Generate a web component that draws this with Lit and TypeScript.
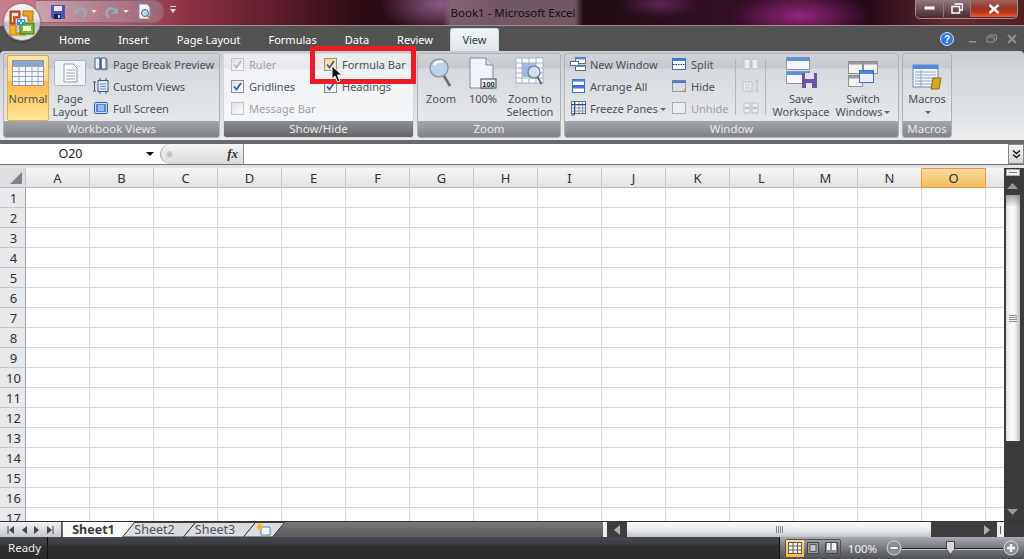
import { LitElement, html, css } from 'lit';
import { customElement } from 'lit/decorators.js';

const COLS = 'ABCDEFGHIJKLMNO'.split('');
const ROWS = Array.from({ length: 17 }, (_, i) => i + 1);

// ---- small ribbon icons, all 16 box unless noted
const icons: Record<string, unknown> = {
  pageBreak: html`<svg width="16" height="16" viewBox="0 0 16 16"><path d="M2 2h5v11H2zM8 2h5v11H8z" fill="#eef3fb" stroke="#3c5c94"/><path d="M3 13.500h11V3" fill="none" stroke="#7d8794" stroke-width="1.400"/><path d="M7.500 2v11" stroke="#3c5c94" stroke-width="2"/></svg>`,
  custom: html`<svg width="18" height="16" viewBox="0 0 18 16"><path d="M1 4h3M1 13h3M2.500 4v9" stroke="#44587c" fill="none"/><rect x="6" y="2.500" width="10" height="11" fill="#dfe8f6" stroke="#44587c"/><path d="M8 6h6M8 8.500h6M8 11h6" stroke="#6d8fc6"/><path d="M7 1h2M13 1h2M7 15h2M13 15h2" stroke="#44587c"/></svg>`,
  full: html`<svg width="16" height="16" viewBox="0 0 16 16"><rect x="1.500" y="2.500" width="13" height="11" rx="1" fill="#cfe0f7" stroke="#2d58a8"/><rect x="3" y="4" width="10" height="8" fill="#4f86d8"/><path d="M5 6h6M5 8h6M5 10h6" stroke="#e8f1ff"/></svg>`,
  newWin: html`<svg width="16" height="16" viewBox="0 0 16 16"><rect x="5.500" y="1.500" width="10" height="6" fill="#fff" stroke="#5d6b80"/><rect x="5.500" y="1.500" width="10" height="2" fill="#5b8ede"/><rect x="0.500" y="5.500" width="8" height="4" fill="#fff" stroke="#5d6b80"/><rect x="5.500" y="9.500" width="10" height="5" fill="#fff" stroke="#5d6b80"/><rect x="5.500" y="9.500" width="10" height="1.500" fill="#5b8ede"/></svg>`,
  arrange: html`<svg width="16" height="16" viewBox="0 0 16 16"><rect x="2.500" y="1.500" width="12" height="6" fill="#fff" stroke="#3f6fb8"/><rect x="2.500" y="1.500" width="12" height="2" fill="#3f7fe0"/><rect x="2.500" y="8.500" width="12" height="6" fill="#fff" stroke="#3f6fb8"/><rect x="2.500" y="8.500" width="12" height="2" fill="#3f7fe0"/></svg>`,
  freeze: html`<svg width="16" height="16" viewBox="0 0 16 16"><rect x="1.500" y="1.500" width="14" height="12" fill="#fff" stroke="#5d6b80"/><path d="M1.500 5h14M1.500 8h14M1.500 11h14M5 1.500v12M9 1.500v12M12.500 1.500v12" stroke="#7f8fa8"/><path d="M1 4.500h15M4.500 1v14H1" stroke="#2e4f86" fill="none"/></svg>`,
  split: html`<svg width="16" height="16" viewBox="0 0 16 16"><rect x="1.500" y="2.500" width="13" height="11" fill="#fff" stroke="#3f6fb8"/><rect x="1.500" y="2.500" width="13" height="2.500" fill="#3f7fe0"/><path d="M2 8.500h12" stroke="#333" stroke-dasharray="1.500 1"/></svg>`,
  hide: html`<svg width="16" height="16" viewBox="0 0 16 16"><rect x="1.500" y="2.500" width="13" height="2.500" fill="#3f7fe0"/><path d="M1.500 2.500h13v11h-13z" fill="none" stroke="#555" stroke-dasharray="1 1"/><path d="M11 13l3-3v3z" fill="#d8c66a"/></svg>`,
  unhide: html`<svg width="16" height="16" viewBox="0 0 16 16"><rect x="1.500" y="2.500" width="13" height="11" fill="#eceeef" stroke="#a9adb2"/></svg>`,
};

const logo = html`<svg width="28" height="28" viewBox="0 0 28 28">
  <path d="M2 3h10v7H7v6H2z" fill="#e2562a" stroke="#9c3414"/>
  <path d="M4 5h6v3H5v6H4z" fill="#fbeee4"/>
  <path d="M15 3h10v10h-5V8h-5z" fill="#f4a11f" stroke="#b06d10"/>
  <path d="M2 17h6v8h10v2H2z" fill="#f7b21a" stroke="#b6800d"/>
  <path d="M12 15h14v11H12z" fill="#76b52f" stroke="#467a14" />
  <path d="M15 18h8v5h-8z" fill="#eef7df"/>
  <path d="M9 11h8v6H9z" fill="#3d87c8"/>
  <path d="M10 12h2v2h-2zM14 12h2v2h-2zM12 14h2v2h-2z" fill="#cfe6fa"/>
</svg>`;

@customElement('app-root')
export class AppRoot extends LitElement {
  static styles = css`
    :host {
      display: block;
      width: 1024px;
      height: 559px;
      overflow: hidden;
      font-family: 'Noto Sans', 'Open Sans', sans-serif;
      font-size: 11px;
      color: #4a525c;
    }
    .app { position: relative; display: flex; flex-direction: column; width: 1024px; height: 559px; overflow: hidden; background: #3a3a3a; }

    /* title bar */
    .title {
      flex: 0 0 26px;
      box-sizing: border-box;
      display: grid;
      grid-template-columns: 1fr auto 1fr;
      border-bottom: 1px solid #a98a90;
      background:
        radial-gradient(ellipse 70px 26px at 800px 16px, #93237f 0%, rgba(147, 35, 127, 0) 100%),
        radial-gradient(ellipse 60px 30px at 440px 4px, #8c5a85 0%, rgba(140, 90, 133, 0) 100%),
        radial-gradient(ellipse 40px 14px at 660px 4px, #5d2650 0%, rgba(93, 38, 80, 0) 100%),
        linear-gradient(90deg, #c9808d 0, #b4596f 110px, #8c3044 190px, #5c1c2c 280px, #2c0c14 360px, #220c14 600px, #320f24 720px, #260a18 870px, #642c32 950px, #4e2024 1024px);
    }
    .qat-wrap { display: flex; align-items: flex-start; padding-left: 36px; }
    .qat {
      display: flex; align-items: center; gap: 0;
      box-sizing: border-box; height: 23px; width: 128px; padding-left: 15px;
      border: 1px solid #8e6470; border-left: none; border-radius: 0 12px 12px 0;
      background: linear-gradient(90deg, #cda2ad, #b27f8e 50%, #9c6474);
    }
    .qat svg { display: block; flex: none; }
    .qat .gap { width: 8px; flex: none; }
    .caret { width: 0; height: 0; border: 3px solid transparent; border-top: 3px solid #e2e2e2; border-bottom: 0; margin: 0 8px 0 4px; }
    .qat-more { margin: 5px 0 0 5px; }
    .doc {
      color: #111; font-size: 11.5px; line-height: 25px; margin-left: 2px; padding: 0 8px;
      background: linear-gradient(90deg, rgba(135, 105, 120, 0), rgba(135, 105, 120, .8) 8px, rgba(135, 105, 120, .8) calc(100% - 8px), rgba(135, 105, 120, 0));
    }
    .win { justify-self: end; display: flex; height: 18px; margin-right: 6px; border: 1px solid #a08d92; border-top: none; border-radius: 0 0 5px 5px; overflow: hidden; }
    .win div { display: flex; align-items: center; justify-content: center; height: 17px; border-right: 1px solid #8d7a7e; background: linear-gradient(#94787e, #4e2d33); }
    .win .b1 { width: 27px; }
    .win .b2 { width: 26px; }
    .win .b3 { width: 46px; border: none; background: linear-gradient(#a86058 0, #8e3c34 45%, #c42f12 70%, #e0623c 100%); }

    /* tabs */
    .tabs { flex: 0 0 25px; display: flex; background: #535353; padding-left: 45px; position: relative; color: #fff; font-size: 11px; }
    .tab { padding: 0 14px; line-height: 27px; height: 25px; }
    .tab.on {
      box-sizing: border-box; margin: 2px 0 0 3px; padding: 0; width: 49px; height: 23px; line-height: 22px; text-align: center;
      color: #2f3a46; background: linear-gradient(#eef6f8, #e3e6e9); border: 1px solid #c5dfe4; border-bottom: none; border-radius: 3px 3px 0 0;
    }
    .tabs-spacer { flex: 1; }
    .tab-ctl { display: flex; align-items: center; gap: 8px; margin-right: 6px; }
    .tab-ctl svg { display: block; }
    .tab-ctl .min { margin-left: 6px; }

    /* ribbon */
    .ribbon {
      flex: 0 0 93px; box-sizing: border-box; display: flex; gap: 3px; padding: 2px 0 0 3px;
      border-bottom: 4px solid #6a6a6a;
      background: linear-gradient(#c8ccd1 0, #d2d5d9 18px, #dfe2e5 60px, #eaecee 88px);
      border-radius: 4px 4px 0 0;
    }
    .group {
      box-sizing: border-box; height: 85px; display: flex; flex-direction: column;
      border: 1px solid #aeb2b6; border-radius: 3px;
      background: linear-gradient(#cfd2d7 0, #c6c9cf 14px, #d6d9dd 15px, #e6e8ea 68px);
    }
    .group.lit { background: linear-gradient(#eceef0 0, #e6e8eb 14px, #f1f2f4 16px, #f6f7f8 68px); border-color: #d4d6d9; }
    .body { flex: 1; display: flex; min-height: 0; }
    .band {
      flex: 0 0 16px; text-align: center; line-height: 16px; color: #eaeaea; font-size: 11.5px;
      background: linear-gradient(#a3a6aa, #7f8286); border-radius: 0 0 2px 2px;
    }
    .lit .band { background: linear-gradient(#8c8f93, #626468); }
    .g1 { width: 217px; }
    .g2 { width: 191px; }
    .g3 { width: 144px; }
    .g4 { width: 335px; }
    .g5 { width: 50px; }

    .big { display: flex; flex-direction: column; align-items: center; line-height: 13px; text-align: center; flex: none; }
    .big svg { display: block; margin-top: 3px; }
    .big .ico { height: 35px; display: flex; align-items: flex-start; justify-content: center; margin-bottom: 3px; }
    .big svg.top6 { margin-top: 6px; }
    .big svg.top7 { margin-top: 7px; }
    .big svg.top10 { margin-top: 10px; }
    .normal {
      box-sizing: border-box; width: 42px; height: 66px; margin: 1px 3px 0 3px; border: 1px solid #e2ab45; border-radius: 2px;
      background: linear-gradient(#fde6a6 0, #fdd581 38%, #ffb949 40%, #ffd77c 80%, #ffe7a0 100%);
    }
    .normal .ico { height: 30px; margin-bottom: 6px; align-items: flex-end; }
    .normal svg { margin-top: 0; }
    .layout { width: 36px; }
    .stack { display: flex; flex-direction: column; margin-top: -1px; }
    .small { display: flex; align-items: center; gap: 4px; height: 22px; white-space: nowrap; }
    .small svg { display: block; flex: none; }
    .small .iw { width: 16px; display: flex; justify-content: center; }
    .small.off { color: #9ea2a6; }
    .g1 .stack { margin-left: 5px; }
    .g2 .body { padding-left: 7px; }
    .g2 .stack + .stack { margin-left: 8px; }
    .g2 .stack { width: 85px; }
    .check { box-sizing: border-box; width: 13px; height: 13px; margin-right: 1px; border: 1px solid #8b8f94; background: linear-gradient(135deg, #dfe2e6, #fafafa); display: flex; align-items: center; justify-content: center; flex: none; }
    .check.off { border-color: #c2c5c9; }
    .check.hot { background: linear-gradient(135deg, #fbd88a, #fff2c4); border-color: #9c917a; }
    .zoom-b { width: 42px; }
    .g3 .body { padding-left: 2px; }
    .zs { width: 56px; margin-left: -2px; }
    .g4 .body { padding-left: 5px; }
    .g4 .stack.first { width: 101px; }
    .g4 .stack.second { width: 64px; }
    .sep { width: 1px; height: 56px; margin-top: 5px; background: #b3b7bb; flex: none; }
    .tiny { display: flex; flex-direction: column; width: 29px; margin-top: -1px; align-items: center; }
    .tiny div { height: 22px; display: flex; align-items: center; }
    .g4 .w1 { width: 66px; margin-left: 2px; }
    .g4 .w2 { width: 58px; }
    .g5 .big { width: 48px; }
    .drop { display: inline-block; width: 0; height: 0; border: 3px solid transparent; border-top: 3px solid #5e6670; border-bottom: 0; vertical-align: 2px; margin-left: 2px; }

    /* formula bar */
    .fbar { flex: 0 0 21px; box-sizing: border-box; display: flex; background: #fff; border-bottom: 1px solid #6d6d6d; }
    .name { position: relative; width: 157px; text-align: center; padding-right: 16px; box-sizing: border-box; color: #1b1b1b; font-size: 12.5px; line-height: 20px; }
    .name::after { content: ''; position: absolute; left: 146px; top: 8px; border: 4px solid transparent; border-top: 4px solid #111; border-bottom: 0; }
    .fx {
      width: 84px; margin-left: 3px; box-sizing: border-box; display: flex; align-items: center; justify-content: space-between; padding: 0 5px 0 5px;
      background: linear-gradient(#f4f5f6, #d8dadc); border-right: 1px solid #8a8a8a; border-radius: 10px 0 0 10px; border-left: 1px solid #999;
    }
    .fx i { font-family: 'Liberation Serif', serif; font-size: 13px; color: #333; font-weight: bold; }
    .ball { width: 7px; height: 7px; border-radius: 50%; background: radial-gradient(#b4b8bc, #dfe1e3); }
    .input { flex: 1; }
    .expand { width: 16px; background: linear-gradient(#f4f4f4, #d4d4d4); border: 1px solid #888; box-sizing: border-box; display: flex; align-items: center; justify-content: center; }
    .expand svg { display: block; }
    .strip { flex: 0 0 3px; background: #e3e4e6; }

    /* sheet */
    .sheet { flex: 1; min-height: 0; display: flex; }
    .cells { flex: 1; overflow: hidden; background: #fff; }
    .grid { display: grid; grid-template-columns: 26px repeat(15, 64px) 64px; grid-auto-rows: 20px; }
    .hd, .rh {
      box-sizing: border-box; display: flex; align-items: center; justify-content: center; color: #2c3038; font-size: 13px;
      border-right: 1px solid #c5c7cb; border-bottom: 1px solid #b8babd; background: linear-gradient(#f6f6f6, #e2e3e4);
    }
    .rh { background: #e8e9eb; border-bottom-color: #c5c7cb; border-right-color: #9ea0a3; padding: 1px 0 0 2px; }
    .hd.on { background: linear-gradient(#f9d99f, #f1c15f); border: 1px solid #f29536; margin-left: -1px; }
    .hd.corner { align-items: flex-end; justify-content: flex-end; padding: 0 3px 3px 0; background: #dcdddf; }
    .c { box-sizing: border-box; border-right: 1px solid #d0d7e5; border-bottom: 1px solid #d0d7e5; }
    .vs { flex: 0 0 20px; box-sizing: border-box; display: flex; flex-direction: column; align-items: center; padding-right: 3px; background: #3b3b3b; }
    .vs svg { display: block; }
    .vsplit { width: 14px; height: 7px; margin-top: 1px; box-sizing: border-box; background: #f2f2f2; border: 1px solid #aaa; display: flex; align-items: center; justify-content: center; }
    .vsplit::after { content: ''; width: 8px; height: 1px; background: #777; }
    .varrow { height: 19px; display: flex; align-items: center; }
    .vthumb {
      width: 14px; height: 246px; box-sizing: border-box; display: flex; align-items: center; justify-content: center;
      background: linear-gradient(rgba(110, 110, 110, .6), rgba(110, 110, 110, 0) 12px), linear-gradient(90deg, #dfe0e2, #fafafa 35%, #f2f2f3 65%, #b9bbbe);
    }
    .vspace { flex: 1; }
    .vbottom { height: 19px; display: flex; align-items: center; }

    /* sheet tabs row */
    .stabs { flex: 0 0 16px; display: flex; background: linear-gradient(#7a7a7a, #5a5a5a); border-top: 1px solid #333; box-sizing: border-box; height: 16px; }
    .nav { width: 62px; flex: none; display: flex; align-items: center; justify-content: space-around; padding: 0 3px; box-sizing: border-box; background: linear-gradient(#f0f1f3, #c6c8cc); border-right: 1px solid #555; }
    .nav svg { display: block; }
    .stab { position: relative; flex: none; box-sizing: border-box; text-align: center; line-height: 15px; color: #4a525c; font-size: 12.5px; height: 15px; padding-left: 4px; }
    .stab svg { position: absolute; left: 0; top: 0; display: block; }
    .stab span { position: relative; }
    .stab.on { font-weight: bold; color: #3a3a3a; padding: 0 0 0 2px; }
    .t1 { width: 59px; margin-left: 1px; z-index: 2; }
    .t2 { width: 61px; }
    .t3 { width: 60px; }
    .t4 { width: 29px; }
    .t4 svg + svg { left: 13px; top: 1px; }
    .stab-fill { flex: 1; }
    .hsplit { width: 4px; flex: none; background: #efefef; }
    .harrow { width: 20px; flex: none; display: flex; align-items: center; justify-content: center; background: #3e3e3e; }
    .hthumb { width: 304px; flex: none; display: flex; align-items: center; justify-content: center; background: linear-gradient(#fbfbfc, #e8e9eb 55%, #bfc1c5); }
    .htrack { width: 46px; flex: none; background: #3e3e3e; }
    .hsplit2 { width: 7px; flex: none; background: #efefef; display: flex; align-items: center; justify-content: center; }
    .hsplit2::after { content: ''; width: 1px; height: 8px; background: #666; }
    .hcorner { width: 20px; flex: none; background: #3b3b3b; }
    .harrow svg { display: block; }

    /* status */
    .status { flex: 0 0 22px; display: flex; color: #f0f0f0; font-size: 11.5px; background: linear-gradient(#44474c 0, #3c3e42 32%, #2f2f2f 40%, #2a2a2a 100%); }
    .ready { box-sizing: border-box; width: 48px; padding-left: 8px; line-height: 21px; border-right: 1px solid #111; }
    .st-fill { flex: 1; }
    .st-right { box-sizing: border-box; width: 245px; display: flex; align-items: center; border-left: 1px solid #111; background: linear-gradient(#a9acb0 0, #7f8286 40%, #4f5052 100%); }
    .views { display: flex; margin-left: 5px; box-sizing: border-box; height: 19px; border: 1px solid #505256; border-radius: 2px; }
    .views div { width: 18px; display: flex; align-items: center; justify-content: center; }
    .views svg { display: block; }
    .views .v1 { background: linear-gradient(#fbdb93, #fdb63c); }
    .pct { width: 43px; text-align: center; font-size: 11.5px; color: #f2f2f2; }
    .slider { display: flex; align-items: center; margin-left: 2px; }
    .slider svg { display: block; flex: none; }
    .track { position: relative; width: 101px; height: 1px; background: #222; box-shadow: 0 1px 0 #ccc; }
    .thumb { position: absolute; left: 44px; top: -7px; }

    /* overlays */
    .office {
      position: absolute; left: 4px; top: 4px; width: 36px; height: 36px; border-radius: 50%; box-sizing: border-box;
      display: flex; align-items: center; justify-content: center;
      background: linear-gradient(#f5f5f5 0, #e6e6e6 45%, #bdbdbd 55%, #e9e9e9 100%);
      box-shadow: 0 0 0 1px #8a8a8a, 0 1px 3px rgba(0, 0, 0, .6);
    }
    .office svg { display: block; }
    .redbox { position: absolute; left: 310px; top: 46px; width: 106px; height: 38px; box-sizing: border-box; border: 5px solid #ed1c24; }
    .cursor { position: absolute; left: 331px; top: 65px; display: block; }
  `;

  private check(on: boolean, off = false, hot = false) {
    const color = off ? '#b4b8bd' : '#3b5f9e';
    return html`<span class="check ${off ? 'off' : ''} ${hot ? 'hot' : ''}">
      ${on ? html`<svg width="9" height="9" viewBox="0 0 9 9"><path d="M1 4.500l2.500 3L8 1" fill="none" stroke="${color}" stroke-width="1.800"/></svg>` : ''}
    </span>`;
  }

  private small(icon: string, label: string, off = false, drop = false) {
    return html`<div class="small ${off ? 'off' : ''}"><span class="iw">${icons[icon]}</span><span>${label}${drop ? html`<i class="drop"></i>` : ''}</span></div>`;
  }

  private renderTitle() {
    return html`<div class="title">
      <div class="qat-wrap">
        <div class="qat">
          <svg width="14" height="14" viewBox="0 0 14 14"><path d="M0 0h14v14H2l-2-2z" fill="#4a55b8"/><rect x="3" y="1" width="8" height="5" fill="#e8ecf8"/><rect x="3" y="9" width="7" height="5" fill="#1c2450"/><rect x="7" y="10" width="2" height="3" fill="#c7cde8"/></svg>
          <span class="gap"></span>
          <svg width="14" height="14" viewBox="0 0 14 14"><path d="M4 5C8 1.500 12.500 4 12.500 8c0 2-1 3.500-3 5" fill="none" stroke="#94a9b8" stroke-width="2.600"/><path d="M1 2v6.500h6.500z" fill="#94a9b8"/></svg>
          <i class="caret"></i>
          <svg width="14" height="14" viewBox="0 0 14 14"><path d="M10 5C6 1.500 1.500 4 1.500 8c0 2 1 3.500 3 5" fill="none" stroke="#94a9b8" stroke-width="2.600"/><path d="M13 2v6.500H6.500z" fill="#94a9b8"/></svg>
          <i class="caret"></i>
          <svg width="16" height="18" viewBox="0 0 16 18"><path d="M2 1h8l3 3v12H2z" fill="#f4f6fa" stroke="#7b8ca4"/><circle cx="8" cy="10" r="3.500" fill="#bcd6f0" stroke="#566"/><path d="M10.500 12.500l3 3" stroke="#a8832c" stroke-width="2"/></svg>
        </div>
        <svg class="qat-more" width="8" height="10" viewBox="0 0 8 10"><path d="M1 1.500h6" stroke="#ddd"/><path d="M1 4h6L4 8z" fill="#ddd"/></svg>
      </div>
      <div class="doc">Book1 - Microsoft Excel</div>
      <div class="win">
        <div class="b1"><svg width="12" height="5" viewBox="0 0 12 5"><rect x="0.500" y="0.500" width="10" height="3" fill="#fff"/></svg></div>
        <div class="b2"><svg width="12" height="11" viewBox="0 0 12 11"><path d="M3.500 1h8v6H9M1 3.500h7.500V10H1z" fill="none" stroke="#fff" stroke-width="1.500"/></svg></div>
        <div class="b3"><svg width="12" height="10" viewBox="0 0 12 10"><path d="M1.500 1l9 8M10.500 1l-9 8" stroke="#fff" stroke-width="2.400"/></svg></div>
      </div>
    </div>`;
  }

  private renderTabs() {
    return html`<div class="tabs">
      <div class="tab">Home</div>
      <div class="tab">Insert</div>
      <div class="tab">Page Layout</div>
      <div class="tab">Formulas</div>
      <div class="tab">Data</div>
      <div class="tab">Review</div>
      <div class="tab on">View</div>
      <div class="tabs-spacer"></div>
      <div class="tab-ctl">
        <svg width="14" height="14" viewBox="0 0 14 14"><circle cx="7" cy="7" r="6.500" fill="#2f7be0" stroke="#cfe0f8"/><text x="7" y="11" font-size="10" font-weight="bold" text-anchor="middle" fill="#fff" font-family="Liberation Sans">?</text></svg>
        <svg class="min" width="10" height="10" viewBox="0 0 10 10"><rect x="1" y="7" width="7" height="1.500" fill="#8f9296"/></svg>
        <svg width="12" height="10" viewBox="0 0 12 10"><path d="M3.500 2.500V1h7v5H8.500M1 3h7v5H1z" fill="none" stroke="#8f9296"/></svg>
        <svg width="12" height="10" viewBox="0 0 12 10"><path d="M2 1l8 8M10 1l-8 8" stroke="#8f9296" stroke-width="2"/></svg>
      </div>
    </div>`;
  }

  private renderRibbon() {
    return html`<div class="ribbon">
      <div class="group g1">
        <div class="body">
          <div class="big normal">
            <div class="ico"><svg width="32" height="26" viewBox="0 0 32 26"><rect x="0.500" y="0.500" width="31" height="25" fill="#f6f8fc" stroke="#8b97a8"/><rect x="1" y="1" width="30" height="5" fill="#8fa6c8"/><path d="M1 6.500h30M1 11.500h30M1 16.500h30M1 21.500h30M7 1v24M13.500 1v24M20 1v24M26 1v24" stroke="#97a8c2"/></svg></div>
            <span>Normal</span>
          </div>
          <div class="big layout">
            <div class="ico"><svg class="top6" width="32" height="26" viewBox="0 0 32 26"><rect x="0.500" y="0.500" width="31" height="25" rx="2" fill="#eef3f8" stroke="#a9b3bf"/><path d="M10 4h9l4 4v14H10z" fill="#fff" stroke="#8c97a5"/><path d="M12 10h9M12 13h9M12 16h9M12 19h9" stroke="#96a4b6"/></svg></div>
            <span>Page<br>Layout</span>
          </div>
          <div class="stack">
            ${this.small('pageBreak', 'Page Break Preview')}
            ${this.small('custom', 'Custom Views')}
            ${this.small('full', 'Full Screen')}
          </div>
        </div>
        <div class="band">Workbook Views</div>
      </div>
      <div class="group g2 lit">
        <div class="body">
          <div class="stack">
            <div class="small off">${this.check(true, true)}<span>Ruler</span></div>
            <div class="small">${this.check(true)}<span>Gridlines</span></div>
            <div class="small off">${this.check(false, true)}<span>Message Bar</span></div>
          </div>
          <div class="stack">
            <div class="small">${this.check(true, false, true)}<span>Formula Bar</span></div>
            <div class="small">${this.check(true)}<span>Headings</span></div>
          </div>
        </div>
        <div class="band">Show/Hide</div>
      </div>
      <div class="group g3">
        <div class="body">
          <div class="big zoom-b">
            <div class="ico"><svg width="24" height="32" viewBox="0 0 24 32"><circle cx="10" cy="11" r="9" fill="#bcd3ec" stroke="#8c98a6" stroke-width="1.500"/><path d="M5 8a7 6 0 0 1 9-3" stroke="#fff" stroke-width="2" fill="none"/><path d="M15 19l6 10" stroke="#6a6a6a" stroke-width="2.500"/></svg></div>
            <span>Zoom</span>
          </div>
          <div class="big zoom-b">
            <div class="ico"><svg width="28" height="32" viewBox="0 0 28 32"><path d="M1 1h16l7 7v23H1z" fill="#f0f4fa" stroke="#7f8a98"/><path d="M17 1v7h7" fill="#d7dfeb" stroke="#7f8a98"/><rect x="12" y="22" width="15" height="9" fill="#eef0f2" stroke="#444"/><text x="19.500" y="29.500" font-size="7.500" font-weight="bold" text-anchor="middle" fill="#222" font-family="Liberation Sans">100</text></svg></div>
            <span>100%</span>
          </div>
          <div class="big zs">
            <div class="ico"><svg width="30" height="32" viewBox="0 0 30 32"><rect x="1" y="1" width="27" height="25" fill="#fff" stroke="#9cb0cc"/><rect x="7" y="6" width="14" height="14" fill="#9dbcec"/><path d="M1 6h27M1 11h27M1 16h27M1 21h27M7 1v25M14 1v25M21 1v25" stroke="#9cb0cc"/><circle cx="19" cy="15" r="6" fill="#d6e6f6" fill-opacity=".85" stroke="#6a7a8a" stroke-width="1.200"/><path d="M22.500 20l4 7" stroke="#666" stroke-width="2"/></svg></div>
            <span>Zoom to<br>Selection</span>
          </div>
        </div>
        <div class="band">Zoom</div>
      </div>
      <div class="group g4">
        <div class="body">
          <div class="stack first">
            ${this.small('newWin', 'New Window')}
            ${this.small('arrange', 'Arrange All')}
            ${this.small('freeze', 'Freeze Panes', false, true)}
          </div>
          <div class="stack second">
            ${this.small('split', 'Split')}
            ${this.small('hide', 'Hide')}
            ${this.small('unhide', 'Unhide', true)}
          </div>
          <div class="sep"></div>
          <div class="tiny">
            <div><svg width="16" height="12" viewBox="0 0 16 12"><path d="M1 1h6v10H1zM9 1h6v10H9z" fill="#e8eaec" stroke="#bcbfc3"/></svg></div>
            <div><svg width="18" height="14" viewBox="0 0 18 14"><rect x="1" y="3" width="9" height="9" fill="#e8eaec" stroke="#bcbfc3"/><path d="M3 6h5M3 9h5M15 1v12M13 3l2-2 2 2M13 11l2 2 2-2" stroke="#bcbfc3" fill="none"/></svg></div>
            <div><svg width="16" height="12" viewBox="0 0 16 12"><path d="M1 1h6v10H1zM9 1h6v10H9z" fill="#e8eaec" stroke="#bcbfc3"/><path d="M2 6h4M14 6h-4" stroke="#999"/></svg></div>
          </div>
          <div class="sep"></div>
          <div class="big w1">
            <div class="ico"><svg width="31" height="31" viewBox="0 0 31 31"><rect x="0.500" y="0.500" width="23" height="12" fill="#f4f7fc" stroke="#8796ab"/><rect x="1" y="1" width="22" height="3" fill="#5b8ede"/><rect x="0.500" y="14.500" width="23" height="12" fill="#f4f7fc" stroke="#8796ab"/><rect x="1" y="15" width="22" height="3" fill="#5b8ede"/><rect x="16" y="16" width="15" height="15" fill="#6a55a8"/><rect x="19" y="16" width="9" height="6" fill="#e4e0f2"/><rect x="20" y="26" width="6" height="5" fill="#e4e0f2"/></svg></div>
            <span>Save<br>Workspace</span>
          </div>
          <div class="big w2">
            <div class="ico"><svg class="top7" width="30" height="26" viewBox="0 0 30 26"><rect x="0.500" y="0.500" width="14" height="12" fill="#f4f4f4" stroke="#8f8f8f"/><rect x="1" y="1" width="13" height="2.500" fill="#9a9a9a"/><rect x="15.500" y="0.500" width="14" height="12" fill="#f4f4f4" stroke="#8f8f8f"/><rect x="16" y="1" width="13" height="2.500" fill="#9a9a9a"/><rect x="0.500" y="14.500" width="14" height="11" fill="#f4f4f4" stroke="#8f8f8f"/><rect x="1" y="15" width="13" height="2.500" fill="#9a9a9a"/><rect x="11.500" y="9.500" width="14" height="12" fill="#e8effa" stroke="#3f6fb8"/><rect x="12" y="10" width="13" height="3" fill="#4f86e0"/></svg></div>
            <span>Switch<br>Windows<i class="drop"></i></span>
          </div>
        </div>
        <div class="band">Window</div>
      </div>
      <div class="group g5">
        <div class="body">
          <div class="big">
            <div class="ico"><svg class="top10" width="30" height="26" viewBox="0 0 30 26"><rect x="1" y="1" width="25" height="22" fill="#f4f7fc" stroke="#7088b0"/><rect x="1" y="1" width="25" height="4" fill="#4f86e0"/><path d="M3 8h21M3 11h21M3 14h21M3 17h21M3 20h21M9 6v16" stroke="#8da3c6"/><path d="M21 14h8l-2 11h-8z" fill="#d6a82a" stroke="#8c6a14"/></svg></div>
            <span>Macros<br><i class="drop"></i></span>
          </div>
        </div>
        <div class="band">Macros</div>
      </div>
    </div>`;
  }

  private renderFormula() {
    return html`<div class="fbar">
      <div class="name">O20</div>
      <div class="fx"><span class="ball"></span><i>fx</i></div>
      <div class="input"></div>
      <div class="expand"><svg width="9" height="9" viewBox="0 0 9 9"><path d="M1 0.500l3.500 3 3.500-3M1 4.500l3.500 3 3.500-3" fill="none" stroke="#111" stroke-width="1.400"/></svg></div>
    </div>
    <div class="strip"></div>`;
  }

  private renderGrid() {
    return html`<div class="grid">
      <div class="hd corner"><svg width="12" height="12" viewBox="0 0 12 12"><path d="M12 0v12H0z" fill="#7f8387"/></svg></div>
      ${COLS.map(c => html`<div class="hd ${c === 'O' ? 'on' : ''}">${c}</div>`)}
      <div class="hd"></div>
      ${ROWS.map(r => html`<div class="rh">${r}</div>${COLS.map(() => html`<div class="c"></div>`)}<div class="c"></div>`)}
    </div>`;
  }

  private renderVScroll() {
    return html`<div class="vs">
      <div class="vsplit"></div>
      <div class="varrow"><svg width="11" height="6" viewBox="0 0 11 6"><path d="M5.500 0L11 6H0z" fill="#9a9a9a"/></svg></div>
      <div class="vthumb"><svg width="8" height="7" viewBox="0 0 8 7"><path d="M0 .5h8M0 2.500h8M0 4.500h8M0 6.500h8" stroke="#8a8c90"/></svg></div>
      <div class="vspace"></div>
      <div class="vbottom"><svg width="11" height="6" viewBox="0 0 11 6"><path d="M0 0h11L5.500 6z" fill="#9a9a9a"/></svg></div>
    </div>`;
  }

  private renderSheetTabs() {
    // every sheet tab is a parallelogram leaning to the right
    const shape = (w: number) => html`<svg width="${w + 13}" height="15" viewBox="0 0 ${w + 13} 15"><path d="M0.500 15L12.500 0.500H${w + 12.5}L${w + 0.5} 15z" fill="#dadcdf" stroke="#3f3f3f"/></svg>`;
    return html`<div class="stabs">
      <div class="nav">
        <svg width="7" height="8" viewBox="0 0 7 8"><path d="M1 0v8" stroke="#444"/><path d="M7 0v8L2 4z" fill="#444"/></svg>
        <svg width="5" height="8" viewBox="0 0 5 8"><path d="M5 0v8L0 4z" fill="#444"/></svg>
        <svg width="5" height="8" viewBox="0 0 5 8"><path d="M0 0v8l5-4z" fill="#444"/></svg>
        <svg width="7" height="8" viewBox="0 0 7 8"><path d="M6 0v8" stroke="#444"/><path d="M0 0v8l5-4z" fill="#444"/></svg>
      </div>
      <div class="stab t1 on"><svg width="72" height="15" viewBox="0 0 72 15"><path d="M0 0H71L59 15H0z" fill="#fafafa"/></svg><span>Sheet1</span></div>
      <div class="stab t2">${shape(61)}<span>Sheet2</span></div>
      <div class="stab t3">${shape(60)}<span>Sheet3</span></div>
      <div class="stab t4">${shape(29)}<svg width="16" height="13" viewBox="0 0 16 13"><path d="M5 4h9v8H5z" fill="#f4f8fc" stroke="#5d7da8"/><path d="M4 0l1 2 2-1-1 2 2 1-2 1 1 2-2-1-1 2-1-2-2 1 1-2-2-1 2-1-1-2 2 1z" fill="#f2b22a"/></svg></div>
      <div class="stab-fill"></div>
      <div class="hsplit"></div>
      <div class="harrow"><svg width="6" height="10" viewBox="0 0 6 10"><path d="M6 0v10L0 5z" fill="#b0b0b0"/></svg></div>
      <div class="hthumb"><svg width="7" height="7" viewBox="0 0 7 7"><path d="M.5 0v7M2.500 0v7M4.500 0v7M6.500 0v7" stroke="#85878b"/></svg></div>
      <div class="htrack"></div>
      <div class="harrow"><svg width="6" height="10" viewBox="0 0 6 10"><path d="M0 0v10l6-5z" fill="#b0b0b0"/></svg></div>
      <div class="hsplit2"></div>
      <div class="hcorner"></div>
    </div>`;
  }

  private renderStatus() {
    return html`<div class="status">
      <div class="ready">Ready</div>
      <div class="st-fill"></div>
      <div class="st-right">
        <div class="views">
          <div class="v1"><svg width="14" height="12" viewBox="0 0 14 12"><rect x="0.500" y="0.500" width="13" height="11" fill="#fff8e4" stroke="#5a5a5a"/><path d="M.5 4h13M.5 8h13M5 .5v11M9.500 .5v11" stroke="#5a5a5a"/></svg></div>
          <div><svg width="12" height="12" viewBox="0 0 12 12"><rect x="0.500" y="0.500" width="11" height="11" fill="#9c9fa3" stroke="#444"/><rect x="3" y="2.500" width="6" height="7" fill="#c4c6c9" stroke="#555"/></svg></div>
          <div><svg width="13" height="12" viewBox="0 0 13 12"><path d="M.5 .5h12v11H.5z" fill="#8c8f93" stroke="#444"/><path d="M2 1h3v7H2zM7 1h4v7H7z" fill="#f2f2f2"/></svg></div>
        </div>
        <div class="pct">100%</div>
        <div class="slider">
          <svg width="16" height="16" viewBox="0 0 16 16"><circle cx="8" cy="8" r="7" fill="#8c8f93" stroke="#dcdcdc"/><rect x="4" y="6.500" width="8" height="3" fill="#f4f4f4" stroke="#444" stroke-width=".5"/></svg>
          <div class="track"><svg class="thumb" width="9" height="14" viewBox="0 0 9 14"><path d="M.5 .5h8v8l-4 5-4-5z" fill="#d4d6d9" stroke="#444"/></svg></div>
          <svg width="16" height="16" viewBox="0 0 16 16"><circle cx="8" cy="8" r="7" fill="#8c8f93" stroke="#dcdcdc"/><path d="M4 8h8M8 4v8" stroke="#f4f4f4" stroke-width="2.500"/></svg>
        </div>
      </div>
    </div>`;
  }

  render() {
    return html`<div class="app">
      ${this.renderTitle()}
      ${this.renderTabs()}
      ${this.renderRibbon()}
      ${this.renderFormula()}
      <div class="sheet">
        <div class="cells">${this.renderGrid()}</div>
        ${this.renderVScroll()}
      </div>
      ${this.renderSheetTabs()}
      ${this.renderStatus()}
      <div class="office">${logo}</div>
      <div class="redbox"></div>
      <svg class="cursor" width="14" height="19" viewBox="0 0 14 19"><path d="M1 1v13l3-3 2.500 6 2.500-1-2.500-6H11z" fill="#111" stroke="#fff"/></svg>
    </div>`;
  }
}
